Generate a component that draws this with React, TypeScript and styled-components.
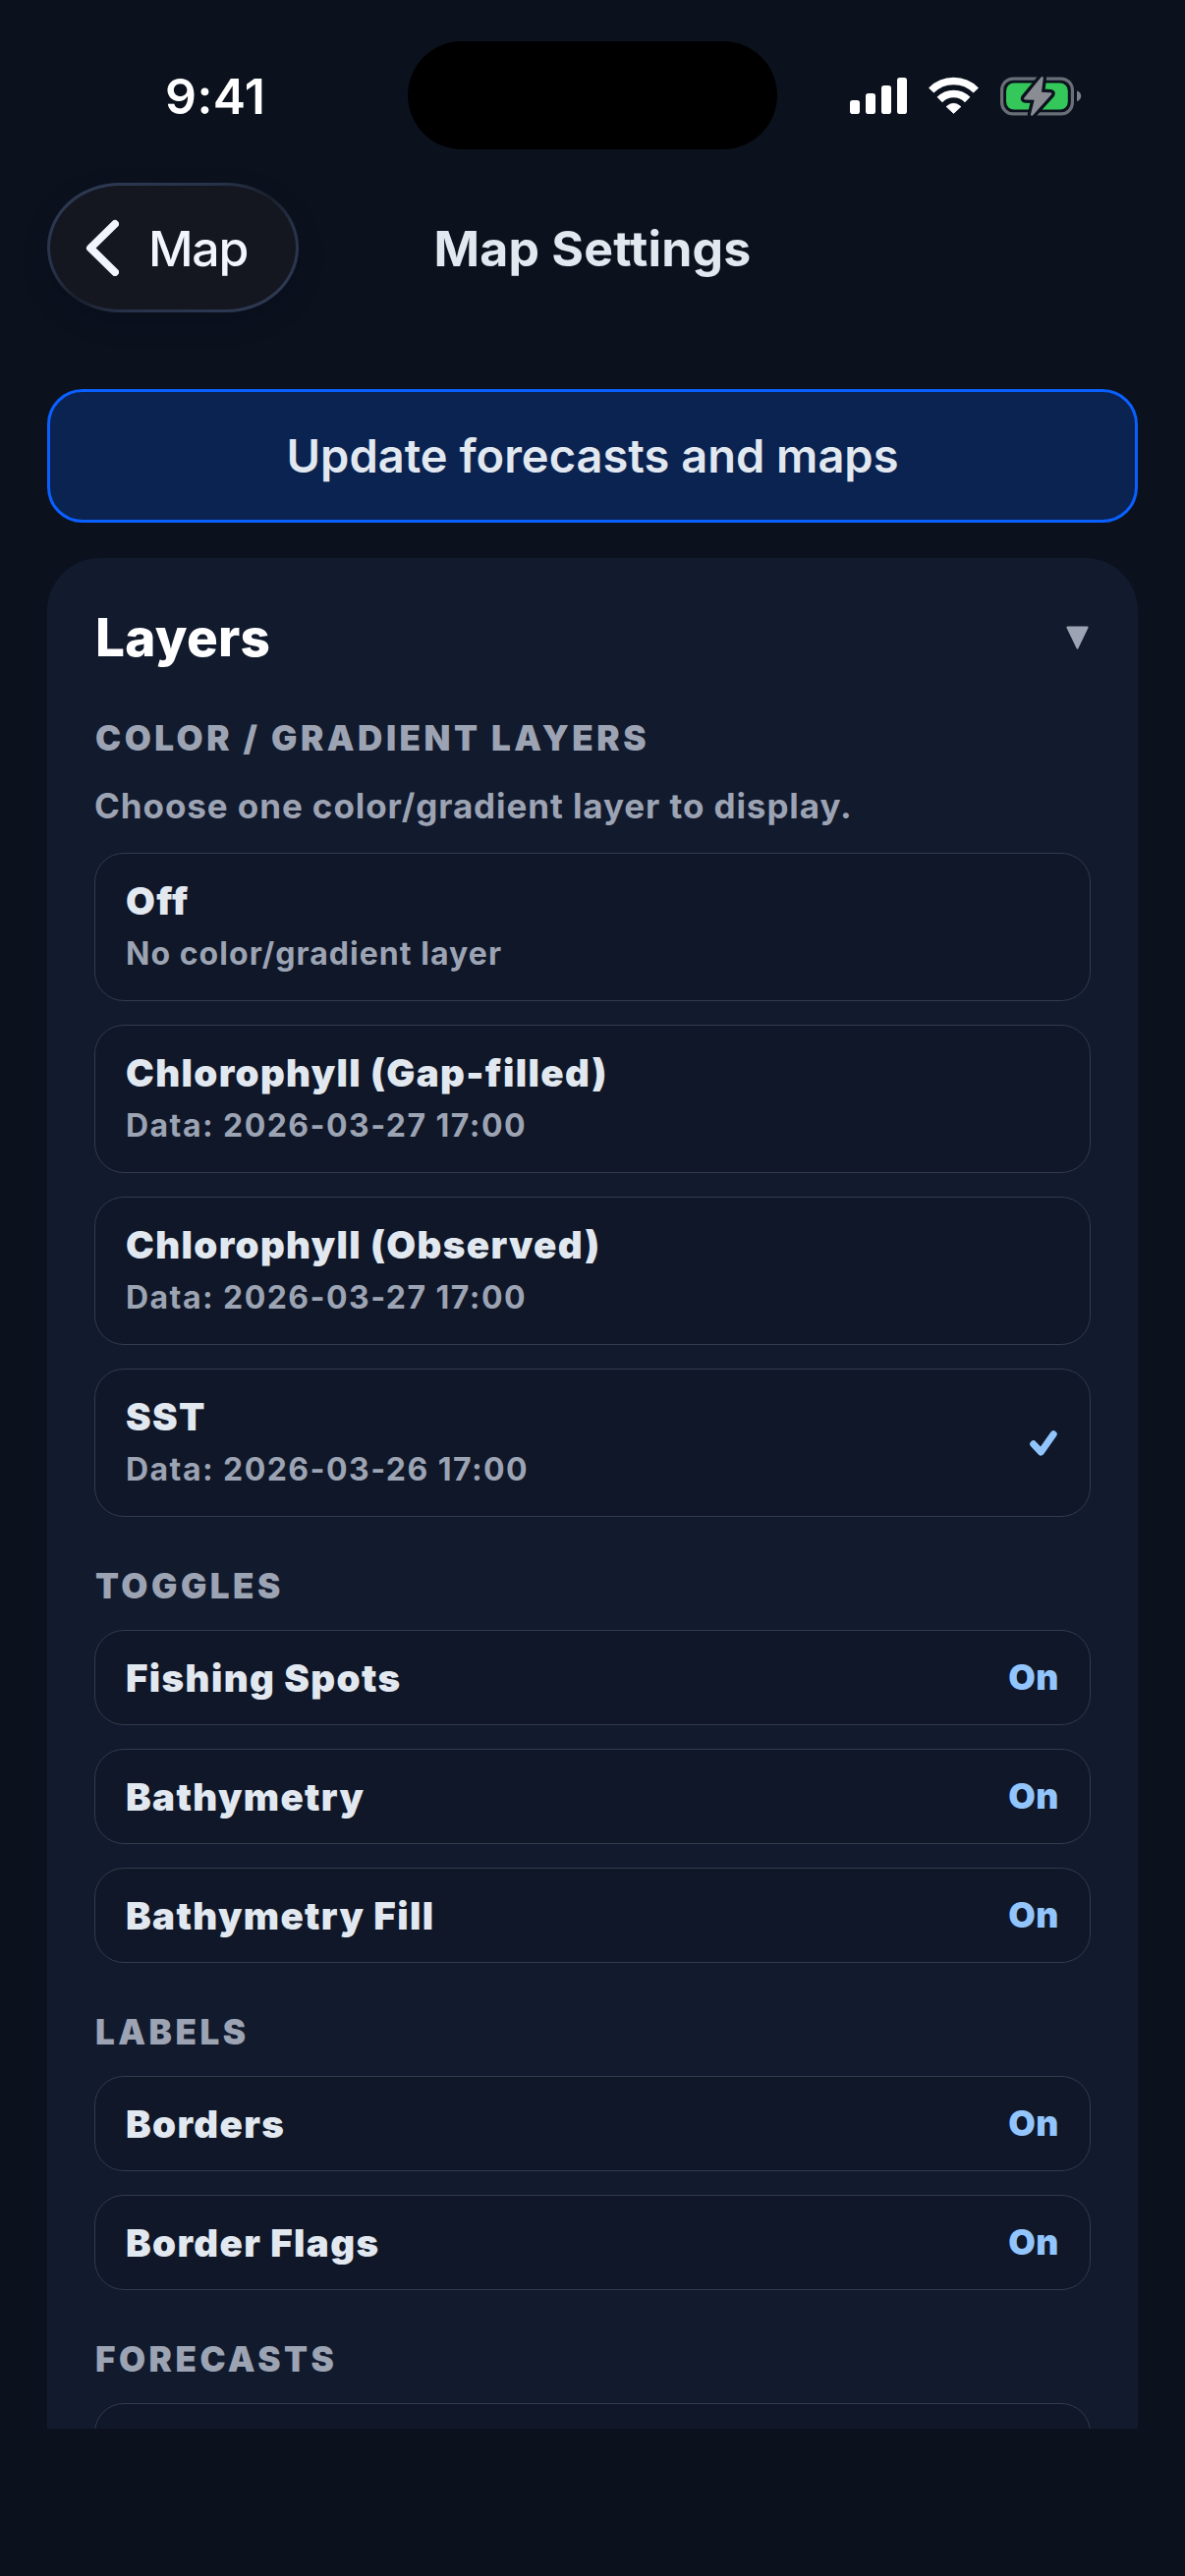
import React from "react";
import styled, { createGlobalStyle } from "styled-components";

const GlobalStyle = createGlobalStyle`
  * { box-sizing: border-box; }
  html, body { margin: 0; padding: 0; background: #0b121e; }
  body { font-family: Inter, "Liberation Sans", sans-serif; -webkit-font-smoothing: antialiased; }
  button { font: inherit; border: 0; margin: 0; padding: 0; background: none; text-align: left; }
`;

const Screen = styled.div`
  display: flex;
  flex-direction: column;
  width: 1206px;
  height: 2622px;
  overflow: hidden;
  background: #0b121e;
  color: #e2e8f0;
`;

const StatusBar = styled.div`
  display: grid;
  grid-template-columns: 415px 376px 415px;
  align-items: center;
  height: 110px;
  margin-top: 42px;
  flex: none;
`;

const Clock = styled.span`
  padding: 2px 0 0 168px;
  font-size: 50px;
  font-weight: 600;
  line-height: 60px;
  letter-spacing: 0.4px;
  color: #fff;
`;

const Island = styled.div`
  height: 110px;
  border-radius: 55px;
  background: #000;
`;

const StatusIcons = styled.div`
  display: flex;
  align-items: center;
  gap: 22px;
  padding-left: 74px;
`;

const Header = styled.header`
  display: grid;
  grid-template-columns: 1fr auto 1fr;
  align-items: center;
  height: 132px;
  margin-top: 34px;
  padding: 0 48px;
  flex: none;
`;

const BackButton = styled.button`
  display: flex;
  align-items: center;
  gap: 30px;
  width: 256px;
  height: 132px;
  padding-left: 36px;
  border: 3px solid transparent;
  border-radius: 74px / 66px;
  background:
    linear-gradient(#14171f, #14171f) padding-box,
    linear-gradient(to bottom right, #303c56 0%, #27324a 35%, #1a1f2b 50%, #27324a 65%, #303c56 100%) border-box;
  box-shadow: 0 10px 26px rgba(5, 10, 24, 0.22);
`;

const BackLabel = styled.span`
  padding-top: 2px;
  font-size: 50px;
  font-weight: 500;
  line-height: 60px;
  letter-spacing: -1.3px;
  color: #f1f5ff;
`;

const Title = styled.h1`
  margin: 0;
  padding-top: 2px;
  font-size: 50px;
  font-weight: 700;
  line-height: 60px;
  letter-spacing: 0.2px;
  color: #e2e8f0;
`;

const Content = styled.main`
  flex: 1;
  min-height: 0;
  overflow: hidden;
  margin-top: 78px;
  padding: 0 48px;
`;

const HomeArea = styled.div`
  height: 150px;
  flex: none;
`;

const UpdateButton = styled.button`
  display: flex;
  align-items: center;
  justify-content: center;
  width: 100%;
  height: 136px;
  border: 3px solid #0a60ff;
  border-radius: 36px;
  background: #0a2350;
  font-size: 47px;
  font-weight: 600;
  line-height: 60px;
  letter-spacing: 0;
  color: #e2e8f0;
`;

const Card = styled.section`
  margin-top: 36px;
  padding: 48px;
  border-radius: 54px;
  background: #121a2e;
`;

const CardHeader = styled.div`
  display: flex;
  align-items: center;
  justify-content: space-between;
  height: 66px;
  padding: 0 2px 0 1px;
`;

const CardTitle = styled.h2`
  margin: 0;
  font-size: 53px;
  font-weight: 800;
  line-height: 66px;
  letter-spacing: 0.3px;
  color: #fff;
`;

const SectionTitle = styled.h3<{ $first?: boolean }>`
  margin: ${(p) => (p.$first ? "45px 0 21px" : "46px 0 21px")};
  padding-left: 1px;
  font-size: 35px;
  font-weight: 900;
  line-height: 48px;
  letter-spacing: 3.5px;
  text-transform: uppercase;
  color: #9ca3b3;
`;

const Hint = styled.p`
  margin: 0 0 24px;
  font-size: 35px;
  font-weight: 700;
  line-height: 48px;
  letter-spacing: 0.92px;
  color: #9ca3b3;
`;

const List = styled.div`
  display: flex;
  flex-direction: column;
  gap: 24px;
`;

const Row = styled.button<{ $tall?: boolean }>`
  display: flex;
  align-items: center;
  justify-content: space-between;
  width: 100%;
  height: ${(p) => (p.$tall ? 151 : 97)}px;
  padding: 0 31px;
  border: 1px solid #323c4c;
  border-radius: 30px;
  background: #0f1728;
`;

const RowText = styled.span`
  display: flex;
  flex-direction: column;
  gap: 11px;
  padding-bottom: 2px;
`;

const RowTitle = styled.span`
  font-size: 38.5px;
  font-weight: 900;
  line-height: 46px;
  letter-spacing: 1.35px;
  color: #e2e8f0;
`;

const RowNote = styled.span<{ $dated?: boolean }>`
  font-size: 32px;
  font-weight: 700;
  line-height: 40px;
  letter-spacing: ${(p) => (p.$dated ? 1.45 : 1.05)}px;
  color: #9ca3b3;
`;

const RowValue = styled.span`
  font-size: 35.5px;
  font-weight: 900;
  line-height: 46px;
  letter-spacing: 0.6px;
  color: #93c5fd;
`;

const SignalIcon = () => (
  <svg width="58" height="38" viewBox="0 0 58 38" fill="#fff">
    <rect x="0" y="24" width="10" height="14" rx="2.8" />
    <rect x="16" y="17" width="10" height="21" rx="2.8" />
    <rect x="32" y="9" width="10" height="29" rx="2.8" />
    <rect x="48" y="1" width="10" height="37" rx="2.8" />
  </svg>
);

const WifiIcon = () => (
  <svg width="51" height="38" viewBox="0 0 51 38" fill="none" stroke="#fff">
    <path d="M2.7 14 A32 32 0 0 1 48.3 14" strokeWidth="7.4" />
    <path d="M11.3 23.5 A19.8 19.8 0 0 1 39.7 23.5" strokeWidth="7.6" />
    <path
      d="M25.5 37.4 L18.1 30.6 Q25.5 24 32.9 30.6 Z"
      fill="#fff"
      strokeWidth="0.8"
      strokeLinejoin="round"
    />
  </svg>
);

const BatteryIcon = () => {
  const bolt =
    "M41.6 1.6 L24.4 22.4 Q23.4 24.2 25.4 24.4 L34.6 24.8 L31 39.4 Q31.2 41.4 33 40.4 L52 19.2 Q53.2 17.4 51.2 17.2 L42 16.8 L43.8 2.2 Q43.2 0.4 41.6 1.6 Z";
  return (
    <svg width="84" height="41" viewBox="0 0 84 41">
      <rect x="1.6" y="3.1" width="71.8" height="35.8" rx="11.5" fill="none" stroke="#696e77" strokeWidth="3.2" />
      <path d="M78 15.4 Q82.2 16.8 82.2 20.8 Q82.2 24.8 78 26.2 Z" fill="#7b7f87" />
      <rect x="6" y="7.5" width="62.8" height="27" rx="8" fill="#34c759" />
      <path d={bolt} fill="#0b121e" stroke="#0b121e" strokeWidth="6.6" strokeLinejoin="round" />
      <path d={bolt} fill="#8a8c93" />
    </svg>
  );
};

const ChevronIcon = () => (
  <svg width="34" height="58" viewBox="0 0 34 58" fill="none" stroke="#f1f5ff" strokeWidth="8" strokeLinecap="round" strokeLinejoin="round">
    <path d="M30 5 L5 29.5 L30 54" />
  </svg>
);

const CollapseIcon = () => (
  <svg width="23" height="24" viewBox="0 0 23 24" fill="#9ca3b3" stroke="#9ca3b3" strokeWidth="2" strokeLinejoin="round">
    <path d="M1.4 1.6 H21.6 L11.5 22.6 Z" />
  </svg>
);

const CheckIcon = () => (
  <svg width="30" height="26" viewBox="0 0 30 26" fill="none" stroke="#93c5fd" strokeWidth="7" strokeLinecap="round" strokeLinejoin="round">
    <path d="M3.7 13.8 L11.4 22 L24.2 3.8" />
  </svg>
);

const layers = [
  { name: "Off", note: "No color/gradient layer" },
  { name: "Chlorophyll (Gap-filled)", note: "Data: 2026-03-27 17:00", dated: true },
  { name: "Chlorophyll (Observed)", note: "Data: 2026-03-27 17:00", dated: true },
  { name: "SST", note: "Data: 2026-03-26 17:00", dated: true, selected: true },
];

const sections = [
  { title: "Toggles", rows: ["Fishing Spots", "Bathymetry", "Bathymetry Fill"] },
  { title: "Labels", rows: ["Borders", "Border Flags"] },
  { title: "Forecasts", rows: [""] },
];

export default function App() {
  return (
    <>
      <GlobalStyle />
      <Screen>
        <StatusBar>
          <Clock>9:41</Clock>
          <Island />
          <StatusIcons>
            <SignalIcon />
            <WifiIcon />
            <BatteryIcon />
          </StatusIcons>
        </StatusBar>
        <Header>
          <BackButton>
            <ChevronIcon />
            <BackLabel>Map</BackLabel>
          </BackButton>
          <Title>Map Settings</Title>
        </Header>
        <Content>
          <UpdateButton>Update forecasts and maps</UpdateButton>
          <Card>
            <CardHeader>
              <CardTitle>Layers</CardTitle>
              <CollapseIcon />
            </CardHeader>
            <SectionTitle $first>Color / Gradient Layers</SectionTitle>
            <Hint>Choose one color/gradient layer to display.</Hint>
            <List>
              {layers.map((layer) => (
                <Row key={layer.name} $tall>
                  <RowText>
                    <RowTitle>{layer.name}</RowTitle>
                    <RowNote $dated={layer.dated}>{layer.note}</RowNote>
                  </RowText>
                  {layer.selected && <CheckIcon />}
                </Row>
              ))}
            </List>
            {sections.map((section) => (
              <React.Fragment key={section.title}>
                <SectionTitle>{section.title}</SectionTitle>
                <List>
                  {section.rows.map((name) => (
                    <Row key={name}>
                      {name && <RowTitle>{name}</RowTitle>}
                      {name && <RowValue>On</RowValue>}
                    </Row>
                  ))}
                </List>
              </React.Fragment>
            ))}
          </Card>
        </Content>
        <HomeArea />
      </Screen>
    </>
  );
}
